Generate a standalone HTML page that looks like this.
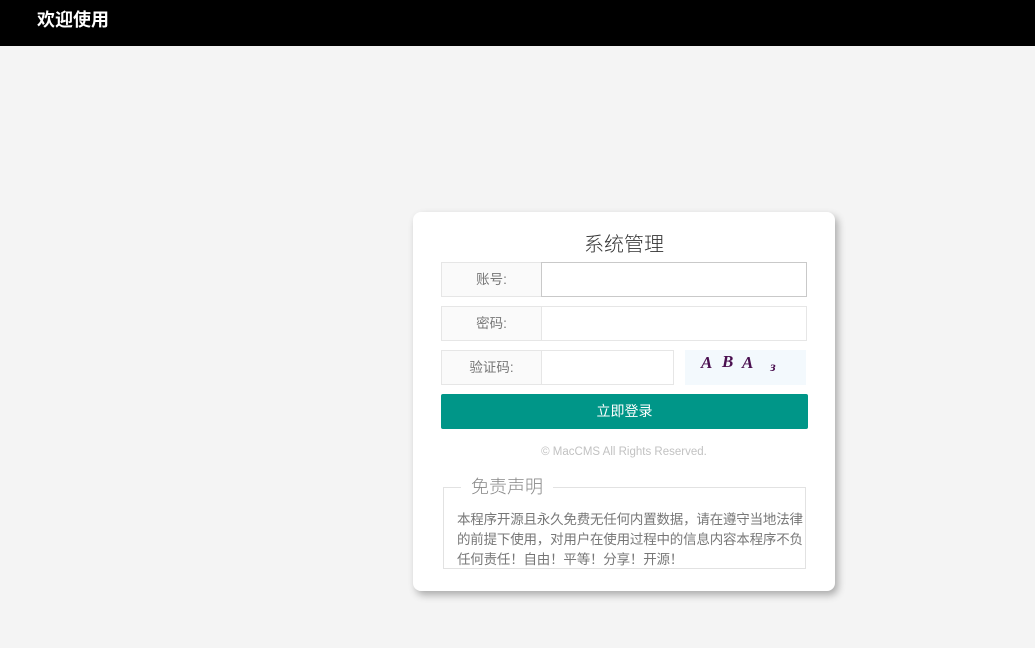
<!DOCTYPE html>
<html><head><meta charset="utf-8"><style>
*{margin:0;padding:0;box-sizing:border-box}
body{width:1035px;height:648px;background:#f4f4f4;font-family:"Liberation Sans","Noto Sans CJK SC",sans-serif;position:relative;overflow:hidden}
.top{position:absolute;left:0;top:0;width:1035px;height:46px;background:#000;color:#fff;font-weight:bold;font-size:18px;line-height:40px;padding-left:37px}
.card{position:absolute;left:413px;top:212px;width:422px;height:379px;background:#fff;border-radius:8px;box-shadow:3px 4px 8px rgba(0,0,0,.3)}
.title{position:absolute;left:0;width:100%;top:16px;text-align:center;font-size:20px;color:#333;font-weight:300}
.lab{position:absolute;left:28px;width:101px;height:35px;border:1px solid #e6e6e6;background:#fafafa;color:#777;font-size:13.5px;text-align:center;line-height:33px}
.inp{position:absolute;left:128px;height:35px;border:1px solid #e6e6e6;background:#fff}
.cap{position:absolute;left:272px;top:138px;width:121px;height:35px;background:#f3f9fd;font-family:"Liberation Serif",serif;font-style:italic;font-weight:bold;color:#4a1050;font-size:17px}
.btn{position:absolute;left:28px;top:182px;width:367px;height:35px;background:#009688;color:#fff;font-size:14px;text-align:center;line-height:35px;border-radius:2px}
.copy{position:absolute;left:0;width:100%;top:234px;text-align:center;color:#c2c2c2;font-size:11.5px}
.fs{position:absolute;left:30px;top:275px;width:363px;height:82px;border:1px solid #e2e2e2}
.lg{position:absolute;left:17px;top:-12px;background:#fff;padding:0 10px;font-size:18px;color:#888;font-weight:300;line-height:22px}
.txt{position:absolute;left:13px;top:22px;font-size:13.5px;color:#777;line-height:20px;white-space:nowrap;letter-spacing:-0.2px}
</style></head><body>
<div class="top">欢迎使用</div>
<div class="card">
<div class="title">系统管理</div>
<div class="lab" style="top:50px">账号:</div><div class="inp" style="top:50px;width:266px;border-color:#c9c9c9">
</div>
<div class="lab" style="top:94px">密码:</div><div class="inp" style="top:94px;width:266px"></div>
<div class="lab" style="top:138px">验证码:</div><div class="inp" style="top:138px;width:133px"></div>
<div class="cap"><span style="position:absolute;left:16px;top:3px">A</span><span style="position:absolute;left:37px;top:2px">B</span><span style="position:absolute;left:57px;top:3px">A</span><span style="position:absolute;left:85px;top:10px;font-size:14px">ɜ</span></div>
<div class="btn">立即登录</div>
<div class="copy">© MacCMS All Rights Reserved.</div>
<div class="fs"><div class="lg">免责声明</div><div class="txt">本程序开源且永久免费无任何内置数据，请在遵守当地法律<br>的前提下使用，对用户在使用过程中的信息内容本程序不负<br>任何责任！自由！平等！分享！开源！</div></div>
</div>
</body></html>
